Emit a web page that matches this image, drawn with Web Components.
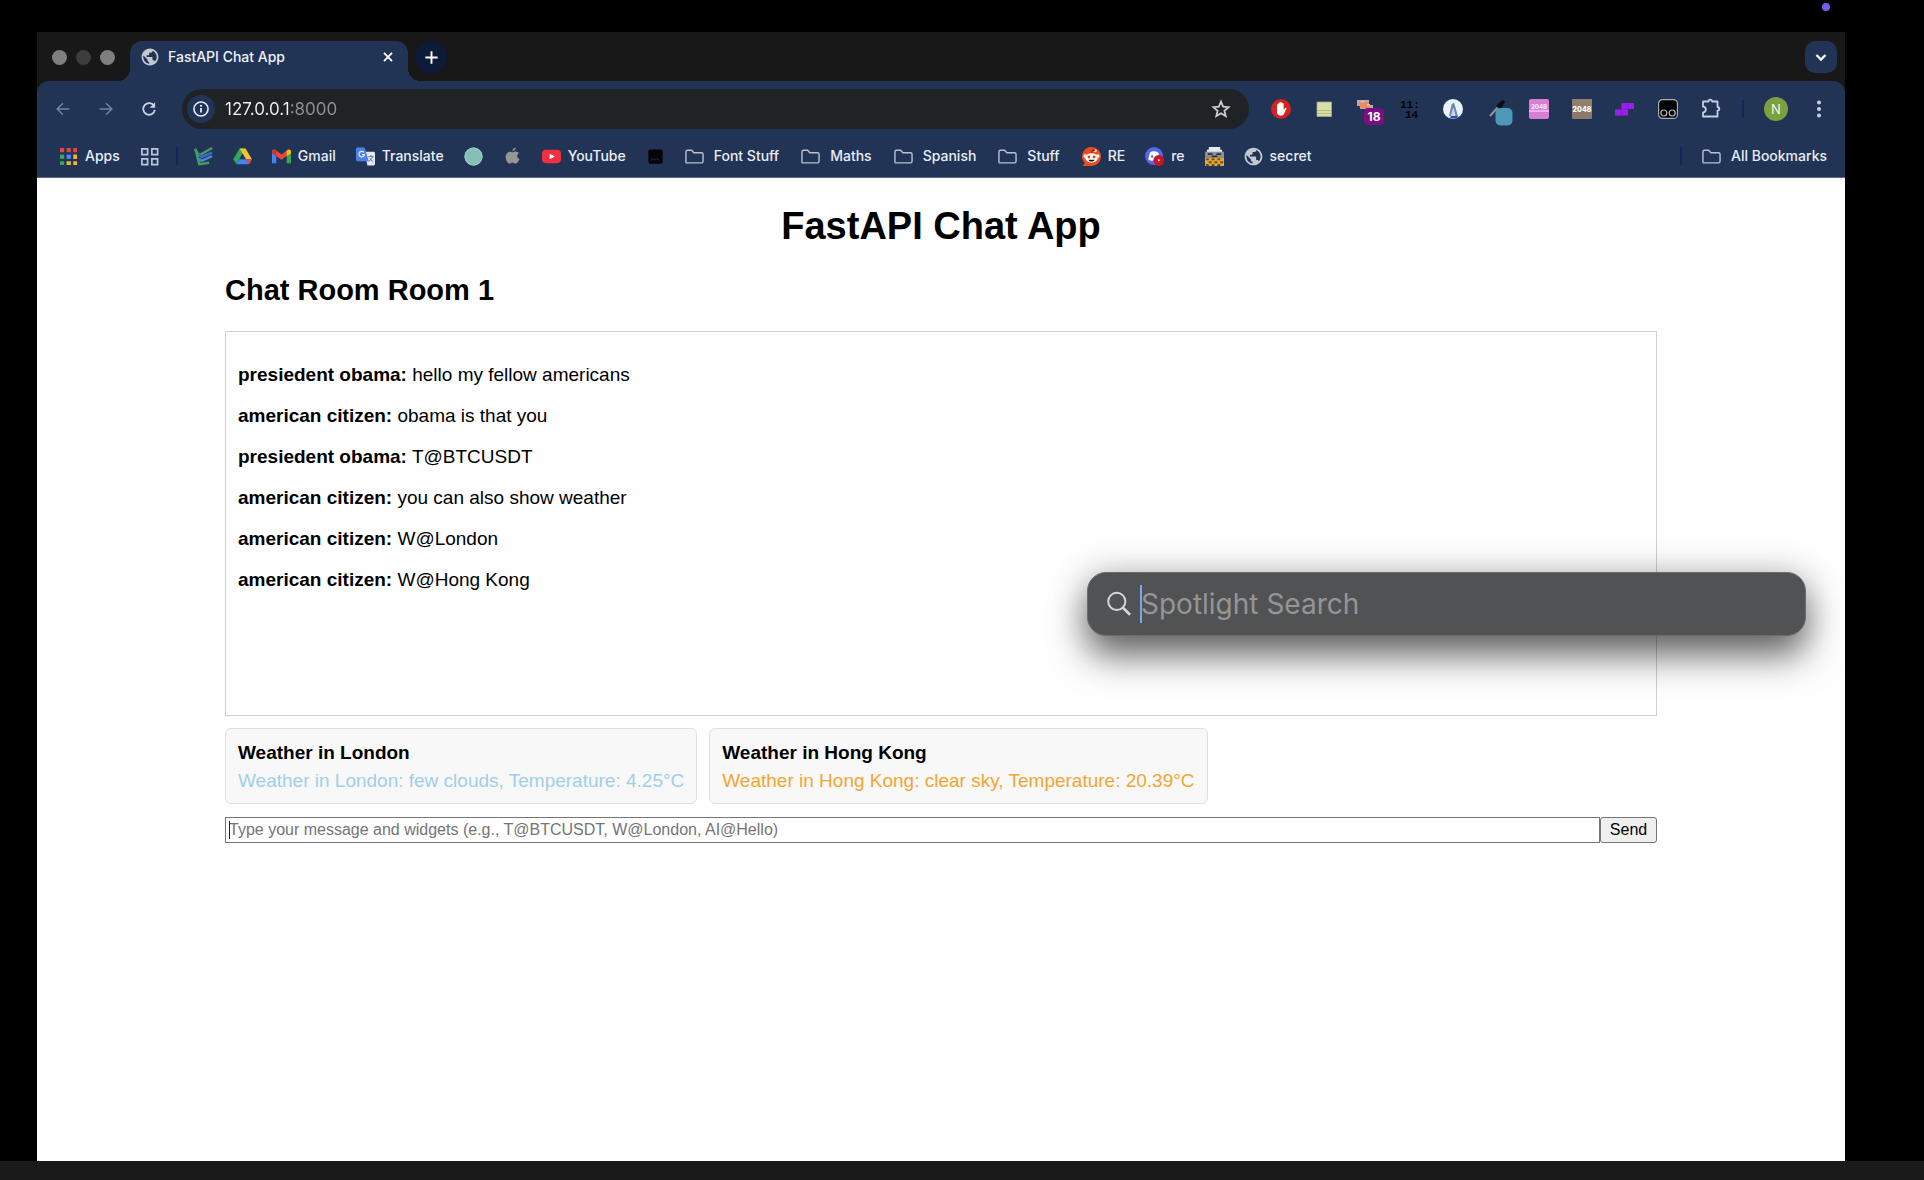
<!DOCTYPE html>
<html lang="en">
<head>
<meta charset="utf-8">
<title>FastAPI Chat App</title>
<style>
html, body { margin: 0; height: 100%; background: #000; }
body { font-family: Inter, "Liberation Sans", sans-serif; }
</style>
</head>
<body>
<mac-desktop>
  <browser-window>
    <tab-strip slot="tabs" label="FastAPI Chat App"></tab-strip>
    <tool-bar slot="toolbar"></tool-bar>
    <bookmarks-bar slot="bookmarks">
      <book-mark icon="apps">Apps</book-mark>
      <book-mark icon="grid" label="Tab groups"></book-mark>
      <bar-divider tight></bar-divider>
      <book-mark icon="check" label="Tasks"></book-mark>
      <book-mark icon="drive" label="Drive"></book-mark>
      <book-mark icon="gmail">Gmail</book-mark>
      <book-mark icon="translate">Translate</book-mark>
      <book-mark icon="teal" label="Circle"></book-mark>
      <book-mark icon="apple" label="Apple"></book-mark>
      <book-mark icon="youtube">YouTube</book-mark>
      <book-mark icon="black" label="Site"></book-mark>
      <book-mark icon="folder" wide>Font Stuff</book-mark>
      <book-mark icon="folder" wide>Maths</book-mark>
      <book-mark icon="folder" wide>Spanish</book-mark>
      <book-mark icon="folder" wide>Stuff</book-mark>
      <book-mark icon="reddit">RE</book-mark>
      <book-mark icon="discord">re</book-mark>
      <book-mark icon="incognito" label="Pixel"></book-mark>
      <book-mark icon="globe">secret</book-mark>
      <bar-divider slot="end"></bar-divider>
      <book-mark slot="end" icon="folder" wide>All Bookmarks</book-mark>
    </bookmarks-bar>
    <chat-app heading="FastAPI Chat App" room="Chat Room Room 1">
      <chat-message from="presiedent obama">hello my fellow americans</chat-message>
      <chat-message from="american citizen">obama is that you</chat-message>
      <chat-message from="presiedent obama">T@BTCUSDT</chat-message>
      <chat-message from="american citizen">you can also show weather</chat-message>
      <chat-message from="american citizen">W@London</chat-message>
      <chat-message from="american citizen">W@Hong Kong</chat-message>
      <weather-card slot="widgets" heading="Weather in London" style="--tone:#9fcfe8">Weather in London: few clouds, Temperature: 4.25°C</weather-card>
      <weather-card slot="widgets" heading="Weather in Hong Kong" style="--tone:#f2a630">Weather in Hong Kong: clear sky, Temperature: 20.39°C</weather-card>
    </chat-app>
  </browser-window>
  <spotlight-search slot="overlay"></spotlight-search>
</mac-desktop>

<script>
const ICONS = {
  globe: '<path transform="translate(-1.2 -1.2) scale(.933)" fill="#c3c9d0" d="M12 2C6.480 2 2 6.480 2 12s4.480 10 10 10 10-4.480 10-10S17.520 2 12 2zm-1 17.930c-3.950-.49-7-3.850-7-7.930 0-.62.08-1.210.21-1.790L9 15v1c0 1.100.9 2 2 2v1.930zm6.900-2.540c-.26-.81-1-1.390-1.900-1.390h-1v-3c0-.55-.45-1-1-1H8v-2h2c.55 0 1-.45 1-1V7h2c1.100 0 2-.9 2-2v-.41c2.930 1.190 5 4.060 5 7.410 0 2.080-.8 3.970-2.100 5.390z"/>',
  close: '<path d="M5.500 5.500l9 9m0-9l-9 9" stroke="#fff" stroke-width="2"/>',
  plus: '<path d="M10 3.500v13M3.500 10h13" stroke="#fff" stroke-width="2"/>',
  chevron: '<path d="M5.500 8l4.500 4.500L14.500 8" fill="none" stroke="#fff" stroke-width="2.400"/>',
  back: '<path d="M17 10H4m6-6.500L3.500 10l6.500 6.500" fill="none" stroke="#7483a2" stroke-width="1.600"/>',
  forward: '<path d="M3 10h13m-6-6.500l6.500 6.500-6.500 6.500" fill="none" stroke="#7483a2" stroke-width="1.600"/>',
  reload: '<path d="M15.800 6.800A6.500 6.500 0 1 0 16.500 11" fill="none" stroke="#c9d2e3" stroke-width="2"/><path d="M16.800 2.500v6h-6z" fill="#c9d2e3"/>',
  info: '<circle cx="10" cy="10" r="7.800" fill="none" stroke="#e4eaf6" stroke-width="1.800"/><path d="M10 9v5" stroke="#e4eaf6" stroke-width="2"/><circle cx="10" cy="6.500" r="1.200" fill="#e4eaf6"/>',
  star: '<path d="M10 2.500l2.100 5.100 5.500.5-4.200 3.600 1.300 5.400L10 14.200l-4.700 2.900 1.300-5.400-4.200-3.600 5.500-.5z" fill="none" stroke="#c9ccd0" stroke-width="1.800"/>',
  hand: '<circle cx="10" cy="10" r="10" fill="#d4231c"/><path d="M6 9.500V5.800c0-1 1.400-1 1.400 0V4.300c0-1 1.700-1 1.700 0v-.6c0-1 1.800-1 1.800 0v1c0-.9 1.700-.9 1.700 0v6l1.500-1.600c.8-.7 1.700-.2 1.300.7l-2.200 4.700c-.6 1.500-1.800 2.200-3.600 2.200-2.700 0-3.600-1.800-3.600-3.600z" fill="#fff"/>',
  note: '<path d="M3 3h14.500v14.500H3z" fill="#d7dfa6"/><path d="M3 11.500h14.500M3 14.500h14.500" stroke="#b4bd83"/><path d="M3 3h14.500v14.500H3z" fill="none" stroke="#9fa884" stroke-width=".8"/>',
  pixel: '<path d="M0 1h12v5h4v3h-5v5H8v-4H3V7H0z" fill="#b7aeb0"/><path d="M2 3h10v6H3z" fill="#ec8a62"/><path d="M4 1.500h3v2H4zM10 5h3v2h-3z" fill="#f3b294"/>',
  clock: '<text x="0" y="8.500" font-size="11" font-weight="700" font-family="Liberation Mono, monospace">11:</text><text x="5" y="19" font-size="11" font-weight="700" font-family="Liberation Mono, monospace">14</text>',
  sail: '<circle cx="10" cy="10" r="10" fill="#e9f3fc"/><path d="M8.500 5.500L11 3.500l4 13.500h-2.500L10.500 9 8 17H6z" fill="#7586ae"/><path d="M10.200 9L8 17l4 1.500z" fill="#c3d4ea"/><path d="M8 17h6l1.500.8c-2 1.500-6 2.300-8.500 1z" fill="#2148c4"/>',
  dropper: '<path d="M4 17L13 7" stroke="#8a93a6" stroke-width="2"/><path d="M10 7l4-4 3.500 3-4 4z" fill="#0b0d12"/><path d="M14 6l4-4" stroke="#0b0d12" stroke-width="3.500"/><rect x="9.500" y="9" width="17" height="17.500" rx="5" fill="#4d98b6"/>',
  pink: '<rect width="20" height="20" rx="2" fill="#d77fd2"/><path d="M0 12h20" stroke="#f2c4ef" stroke-width="1.500"/><text x="10" y="10" text-anchor="middle" font-size="6" font-weight="800" fill="#ffe6ff" font-family="Inter, sans-serif">2048</text>',
  brown: '<rect width="20" height="20" rx="1" fill="#8b7a6b"/><path d="M0 0h20v8L0 14z" fill="#94826f" opacity=".6"/><text x="10" y="12.500" text-anchor="middle" font-size="7" font-weight="800" fill="#fff" font-family="Inter, sans-serif">2048</text>',
  tetris: '<path d="M6.500 4H19v6h-6v6.500H0v-6h6.500z" fill="#9d1cf2"/><path d="M13 4v6M6.500 10.500v6M6.500 10.300H13" stroke="#6f23c4" stroke-width=".8"/>',
  monkey: '<rect x=".6" y=".6" width="18.800" height="18.800" rx="4" fill="#000" stroke="#a9adb5" stroke-width="1.200"/><circle cx="5.800" cy="14" r="3" fill="none" stroke="#b9bcc0" stroke-width="1.200"/><circle cx="14.200" cy="14" r="3" fill="none" stroke="#b9bcc0" stroke-width="1.200"/>',
  puzzle: '<path d="M2 2.500h5.500a1.800 1.800 0 0 1 3.600 0H16.500V8a1.800 1.800 0 0 1 0 3.600V17.500H2v-4.200a2.800 2.800 0 0 0 0-5.600z" fill="none" stroke="#c5cfe2" stroke-width="1.800" stroke-linejoin="round"/>',
  dots: '<g fill="#c9d2e3"><circle cx="10" cy="3.500" r="2"/><circle cx="10" cy="10" r="2"/><circle cx="10" cy="16.500" r="2"/></g>',
  apps: '<path d="M1 1h4.500v4.500H1zM8 1h4.500v4.500H8zM15 1h4v4.500h-4z" fill="#e0483e"/><path d="M1 8h4.500v4.500H1z" fill="#3ba55a"/><path d="M8 8h4.500v4.500H8z" fill="#4689f2"/><path d="M15 8h4v4.500h-4zM15 15h4v4h-4zM8 15h4.500v4H8z" fill="#f0b32c"/><path d="M1 15h4.500v4H1z" fill="#3ba55a"/>',
  grid: '<path d="M2 2h6v6H2zM12.500 2h6v6h-6zM2 12.500h6v6H2zM12.500 12.500h6v6h-6z" fill="none" stroke="#b8c5dc" stroke-width="1.800"/>',
  check: '<g fill="none" stroke-width="2.600"><path d="M1 2l4 7L19 1" stroke="#3fa05a"/><path d="M5 6.500l3 4L19 6" stroke="#3c6cc8"/><path d="M1.500 2l4 16L16 16.500" stroke="#3fa05a"/><path d="M5 12.500l3 2L19 9.500" stroke="#4a86d8"/></g>',
  drive: '<path d="M7 1.500h6L6.500 13 3.500 18 .3 13z" fill="#35a853"/><path d="M7 1.500h6.200L20 13h-6.300z" fill="#fbc02d"/><path d="M6.600 13H20l-3.200 5.200H3.500z" fill="#4285f4"/><path d="M13.700 13H20l-3.200 5.200z" fill="#e5453a"/>',
  gmail: '<path d="M0 4.500V17h4.500V8.500z" fill="#4285f4"/><path d="M15.500 8.500V17H20V4.500z" fill="#35a853"/><path d="M0 4.500C0 2.500 2 2 3.500 3L10 8l6.500-5v5.500L10 13.500 0 6.500z" fill="#e8453c"/><path d="M15.500 3.700C17.500 2 20 2.500 20 5v1.500l-4.500 3.300z" fill="#fbbc04"/><path d="M0 4.500c.2-1.500 2.200-2.500 4.500-.7v5.900L0 6.300z" fill="#c5372c"/>',
  translate: '<path d="M9 5h9.500c.8 0 1.500.7 1.500 1.500V18c0 .8-.7 1.500-1.500 1.500H12z" fill="#e4e7ec"/><path d="M13 10h5.500m-2.700-1.500V10m1.500 0c-.5 2.500-2 4-4 5m1-3.500c1 1.800 2.200 3 3.700 3.800" fill="none" stroke="#6b7b94"/><path d="M1.500.5H9L13.500 15h-12C.7 15 0 14.300 0 13.500V2C0 1.200.7.500 1.500.5z" fill="#4b83ea"/><path d="M8.300 5.700A2.900 2.900 0 1 0 8.900 8H6.300" fill="none" stroke="#e8effc" stroke-width="1.300"/>',
  teal: '<circle cx="10" cy="10" r="9.500" fill="#86bfb4"/><circle cx="10" cy="10" r="9" fill="none" stroke="#9fd2c6"/>',
  apple: '<path d="M13.300.5c.2 2-1.500 4-3.400 3.900C9.700 2.500 11.500.700 13.300.5zM10 5.500c1 0 2-.9 3.600-.8 1.300.1 2.400.7 3.100 1.800-2.600 1.700-2.200 5 .6 6.200-.6 1.900-2.300 4.800-4 4.800-1.300 0-1.700-.8-3.200-.8s-2 .8-3.200.8C5 17.500 2.800 13.600 2.800 10.500c0-3.500 2.200-5.500 4.300-5.600 1.200 0 2.100.6 2.900.6z" fill="#969693"/>',
  youtube: '<rect y="3" width="20" height="14" rx="4" fill="#f0303d"/><path d="M8 7l5.500 3L8 13z" fill="#fff"/>',
  black: '<rect x="2.500" y="2.500" width="15" height="15" rx="2" fill="#030508"/><path d="M5 14l2-1.500 2 1 2-1.500 3 2" fill="none" stroke="#27324c"/>',
  folder: '<path d="M1 16V5.300C1 4.200 1.700 3.500 2.700 3.500H7l2.300 2.500h8c1 0 1.700.7 1.700 1.600V15c0 1-.7 1.700-1.700 1.700H1.900C1.300 16.700 1 16.500 1 16z" fill="none" stroke="#b9c0ce" stroke-width="1.500"/>',
  reddit: '<path d="M10 0a10 10 0 1 1 0 20H.5l2.400-3A10 10 0 0 1 10 0z" fill="#ef4a1e"/><circle cx="3.500" cy="9.500" r="2" fill="#fff"/><circle cx="16.500" cy="9.500" r="2" fill="#fff"/><circle cx="14" cy="4" r="1.500" fill="#fff"/><path d="M10 7l1-4 3 1" fill="none" stroke="#7b1c0c"/><ellipse cx="10" cy="11.500" rx="6.500" ry="5" fill="#fff"/><circle cx="7.300" cy="10.500" r="1.500" fill="#e2421b"/><circle cx="12.700" cy="10.500" r="1.500" fill="#e2421b"/><path d="M6.800 13.300h6.400c-.6 2.700-5.800 2.700-6.400 0z" fill="#101722"/>',
  discord: '<circle cx="9.500" cy="9.500" r="9.500" fill="#5468ef"/><path d="M5 6c3-2 6-2 9 0l2 7-3 1.500H6L3.500 13z" fill="#fff"/><circle cx="7.500" cy="10" r="1.300" fill="#5468ef"/><circle cx="14.500" cy="14" r="5.700" fill="#cf1226"/><circle cx="14.500" cy="14" r="1.100" fill="#fff"/>',
  incognito: '<path d="M4 0h12v3h2v4H2V3h2z" fill="#e6e8ec"/><path d="M0 5h20v6H0z" fill="#8b8f98"/><path d="M3 6.500h5v2H3zM12 6.500h5v2h-5zM7 9h6v2H7z" fill="#30343c"/><path d="M0 11h20v9H0z" fill="#e0a83c"/><path d="M1 12h3v2H1zm6 0h3v2H7zm6 0h3v2h-3zM4 15h3v2H4zm6 0h3v2h-3zm6 0h3v2h-3zM1 18h3v2H1zm6 0h3v2H7zm6 0h3v2h-3z" fill="#6c4a1c"/>',
  search: '<circle cx="8.300" cy="8" r="6.600" fill="none" stroke="#d6d7d7" stroke-width="1.500"/><path d="M13 12.800l5.500 5.500" stroke="#d6d7d7" stroke-width="2"/>'
};

function define(name, html, setup) {
  customElements.define(name, class extends HTMLElement {
    constructor() {
      super();
      this.attachShadow({ mode: 'open' });
    }
    connectedCallback() {
      if (this.shadowRoot.firstChild) return;
      const t = document.createElement('template');
      t.innerHTML = html;
      this.shadowRoot.append(t.content.cloneNode(true));
      if (setup) setup(this, this.shadowRoot);
    }
  });
}

define('app-icon', `<style>
  :host { display: block; flex: none; width: var(--size, 20px); height: var(--size, 20px); }
  svg { display: block; width: 100%; height: 100%; overflow: visible; }
</style><svg viewBox="0 0 20 20" aria-hidden="true"></svg>`,
  (el, root) => { root.querySelector('svg').innerHTML = ICONS[el.getAttribute('name')]; });

define('bar-divider', `<style>
  :host { display: block; flex: none; width: 2px; height: 18px; background: #12275a; }
  :host([tight]) { margin: 0 -4px 0 -3px; }
</style>`);

define('mac-desktop', `<style>
  :host { display: flex; flex-direction: column; position: relative; min-height: 100vh; box-sizing: border-box; overflow: hidden; background: #000; }
  .stage { flex: 1; display: flex; padding: 32px 79px 0 37px; }
  .dock { height: 19px; background: #1a1a1a; }
  .recording { position: absolute; top: 3px; right: 94px; width: 8px; height: 8px; border-radius: 50%; background: #7260ea; }
</style>
<div class="stage"><slot></slot></div><div class="dock"></div>
<span class="recording"></span><slot name="overlay"></slot>`);

define('browser-window', `<style>
  :host { flex: 1; display: flex; flex-direction: column; min-width: 0; background: #181818; }
  .chrome { background: #213456; border-radius: 12px 12px 0 0; border-bottom: 1px solid #5f6b88; }
  main { flex: 1; background: #fefefe; }
</style>
<slot name="tabs"></slot>
<div class="chrome"><slot name="toolbar"></slot><slot name="bookmarks"></slot></div>
<main><slot></slot></main>`);

define('tab-strip', `<style>
  :host { display: flex; height: 49px; box-sizing: border-box; padding: 9px 8px 0 15px; }
  button { border: 0; padding: 0; display: grid; place-items: center; background: none; }
  .lights { display: flex; align-items: center; gap: 9px; margin-right: 15px; height: 32px; }
  .lights span { width: 15px; height: 15px; border-radius: 50%; background: #7e7e7e; }
  .lights span:nth-child(2) { background: #3c3c3c; }
  .tab { position: relative; width: 278px; height: 40px; box-sizing: border-box; padding: 0 11px 8px; display: flex; align-items: center; gap: 9px; border-radius: 12px 12px 0 0; background: #213456; color: #eef2f9; font: 500 14px/20px Inter, sans-serif; }
  .tab::before, .tab::after { content: ""; position: absolute; bottom: 0; width: 12px; height: 12px; }
  .tab::before { right: 100%; background: radial-gradient(circle at 0 0, transparent 12px, #213456 12px); }
  .tab::after { left: 100%; background: radial-gradient(circle at 100% 0, transparent 12px, #213456 12px); }
  .title { flex: 1; }
  .tab app-icon { --size: 18px; }
  .new { width: 32px; height: 32px; margin-left: 7px; border-radius: 50%; background: #0b1b38; }
  .new app-icon { --size: 19px; }
  .list { width: 32px; height: 32px; margin-left: auto; border-radius: 10px; background: #213456; }
</style>
<div class="lights"><span></span><span></span><span></span></div>
<div class="tab"><app-icon name="globe"></app-icon><span class="title"></span><button aria-label="Close tab"><app-icon name="close"></app-icon></button></div>
<button class="new" aria-label="New tab"><app-icon name="plus"></app-icon></button>
<button class="list" aria-label="Search tabs"><app-icon name="chevron"></app-icon></button>`,
  (el, root) => { root.querySelector('.title').textContent = el.getAttribute('label'); });

define('tool-bar', `<style>
  :host { display: flex; align-items: center; padding: 8px 16px 0 12px; }
  button { border: 0; padding: 0; display: grid; place-items: center; background: none; }
  .nav { display: flex; gap: 15px; margin-right: 19px; }
  .nav button { width: 28px; height: 28px; }
  .nav app-icon { --size: 18px; }
  .address { flex: 1; display: flex; align-items: center; gap: 10px; height: 40px; box-sizing: border-box; padding: 0 18px 0 5px; border-radius: 20px; background: #1f2326; }
  .info { width: 28px; height: 28px; border-radius: 50%; background: #213456; }
  .info app-icon { --size: 18px; }
  input { flex: 1; min-width: 0; border: 0; padding: 0; outline: 0; font: 400 17px/24px Inter, sans-serif; color: #e6e8ea;
    background: linear-gradient(90deg, #f0f1f3 65px, #8d9195 65px); -webkit-background-clip: text; background-clip: text; -webkit-text-fill-color: transparent; }
  .extensions { display: flex; gap: 23px; margin: 0 21px 0 22px; }
  .extensions button { position: relative; width: 20px; height: 20px; }
  .badge { position: absolute; left: 7px; top: 9px; width: 20px; border-radius: 4px; background: #7b0f80; color: #fff; font: 700 12px/17px Inter, sans-serif; text-align: center; }
  .avatar { width: 24px; height: 24px; margin: 0 21px 0 20px; border-radius: 50%; background: #7ba03f; color: #f3f7ea; font: 400 13px/24px Inter, sans-serif; }
</style>
<div class="nav">
  <button aria-label="Back"><app-icon name="back"></app-icon></button>
  <button aria-label="Forward"><app-icon name="forward"></app-icon></button>
  <button aria-label="Reload"><app-icon name="reload"></app-icon></button>
</div>
<div class="address">
  <button class="info" aria-label="Site information"><app-icon name="info"></app-icon></button>
  <input type="text" aria-label="Address" value="127.0.0.1:8000">
  <button aria-label="Bookmark this page"><app-icon name="star"></app-icon></button>
</div>
<div class="extensions"></div>
<bar-divider></bar-divider>
<button class="avatar">N</button>
<button aria-label="Menu"><app-icon name="dots"></app-icon></button>`,
  (el, root) => {
    root.querySelector('.extensions').innerHTML =
      ['hand', 'note', 'pixel', 'clock', 'sail', 'dropper', 'pink', 'brown', 'tetris', 'monkey', 'puzzle']
        .map(n => `<button aria-label="${n}"><app-icon name="${n}"></app-icon>${n === 'pixel' ? '<span class="badge">18</span>' : ''}</button>`).join('');
  });

define('bookmarks-bar', `<style>
  :host { display: flex; justify-content: space-between; height: 48px; box-sizing: border-box; padding: 6px 16px 0 22px; }
  div { display: flex; align-items: center; gap: 20px; }
</style><div><slot></slot></div><div><slot name="end"></slot></div>`);

define('book-mark', `<style>
  :host { display: block; color: #e9edf5; font: 500 14px/20px Inter, sans-serif; white-space: nowrap; }
  a { display: flex; align-items: center; gap: 7px; color: inherit; text-decoration: none; }
  :host([wide]) a { gap: 10px; padding-right: 2px; }
  app-icon { --size: 19px; }
</style><a href="#"></a>`,
  (el, root) => {
    const a = root.querySelector('a');
    const icon = document.createElement('app-icon');
    icon.setAttribute('name', el.getAttribute('icon'));
    a.append(icon);
    if (el.hasAttribute('label')) a.setAttribute('aria-label', el.getAttribute('label'));
    else { const s = document.createElement('span'); s.append(document.createElement('slot')); a.append(s); }
  });

define('chat-app', `<style>
  :host { display: block; padding: 24px 188px; color: #000; font: 19px/21px "Liberation Sans", Arial, sans-serif; }
  h1 { margin: 0 0 20px; font-size: 38px; line-height: 48px; text-align: center; }
  h2 { margin: 0 0 21px; font-size: 29px; line-height: 40px; }
  .log { height: 385px; box-sizing: border-box; padding: 12px; border: 1px solid #cfcfcf; }
  .widgets { display: flex; gap: 12px; margin: 12px 0 13px; }
  form { display: flex; }
  .field { flex: 1; display: flex; position: relative; }
  .field::before { content: ""; position: absolute; left: 4px; top: 4px; width: 1px; height: 18px; background: #222; }
  input { flex: 1; min-width: 0; height: 26px; box-sizing: border-box; padding: 0 3px; border: 1px solid #767676; border-radius: 0; outline: 0; background: #fefefe; font: 16px/20px "Liberation Sans", Arial, sans-serif; }
  input::placeholder { color: #757575; }
  form button { width: 57px; height: 26px; padding: 0; border: 1px solid #767676; border-radius: 3px; background: #efefef; color: #000; font: 16px/20px "Liberation Sans", Arial, sans-serif; }
</style>
<h1></h1><h2></h2>
<div class="log"><slot></slot></div>
<div class="widgets"><slot name="widgets"></slot></div>
<form><div class="field"><input type="text" aria-label="Message" placeholder="Type your message and widgets (e.g., T@BTCUSDT, W@London, AI@Hello)"></div><button type="button">Send</button></form>`,
  (el, root) => {
    root.querySelector('h1').textContent = el.getAttribute('heading');
    root.querySelector('h2').textContent = el.getAttribute('room');
  });

define('chat-message', `<style>
  :host { display: block; } p { margin: 20px 0 0; }
</style><p><strong></strong> <slot></slot></p>`,
  (el, root) => { root.querySelector('strong').textContent = el.getAttribute('from') + ':'; });

define('weather-card', `<style>
  :host { display: block; box-sizing: border-box; padding: 13px 12px 12px; border: 1px solid #e0e0e0; border-radius: 6px; background: #f8f8f8; }
  strong { display: block; margin-bottom: 7px; }
  p { margin: 0; color: var(--tone); }
</style><strong></strong><p><slot></slot></p>`,
  (el, root) => { root.querySelector('strong').textContent = el.getAttribute('heading'); });

define('spotlight-search', `<style>
  :host { position: absolute; top: 572px; right: 118px; width: 719px; height: 64px; box-sizing: border-box; display: flex; align-items: center; gap: 9px; padding: 0 18px; border: 1px solid #6c6c6c; border-radius: 19px; background: #515253;
    box-shadow: 0 20px 36px rgba(0,0,0,.56), 0 0 36px rgba(0,0,0,.2); }
  app-icon { --size: 26px; }
  .field { flex: 1; display: flex; position: relative; }
  .field::before { content: ""; position: absolute; left: -1px; top: 0; width: 2px; height: 38px; background: #77a9e8; }
  input { flex: 1; min-width: 0; height: 38px; padding: 0; border: 0; outline: 0; background: none; color: #fff; font: 400 28px/38px Inter, sans-serif; }
  input::placeholder { color: #949595; }
</style>
<app-icon name="search"></app-icon>
<div class="field"><input type="text" aria-label="Spotlight Search" placeholder="Spotlight Search"></div>`);
</script>
</body>
</html>
